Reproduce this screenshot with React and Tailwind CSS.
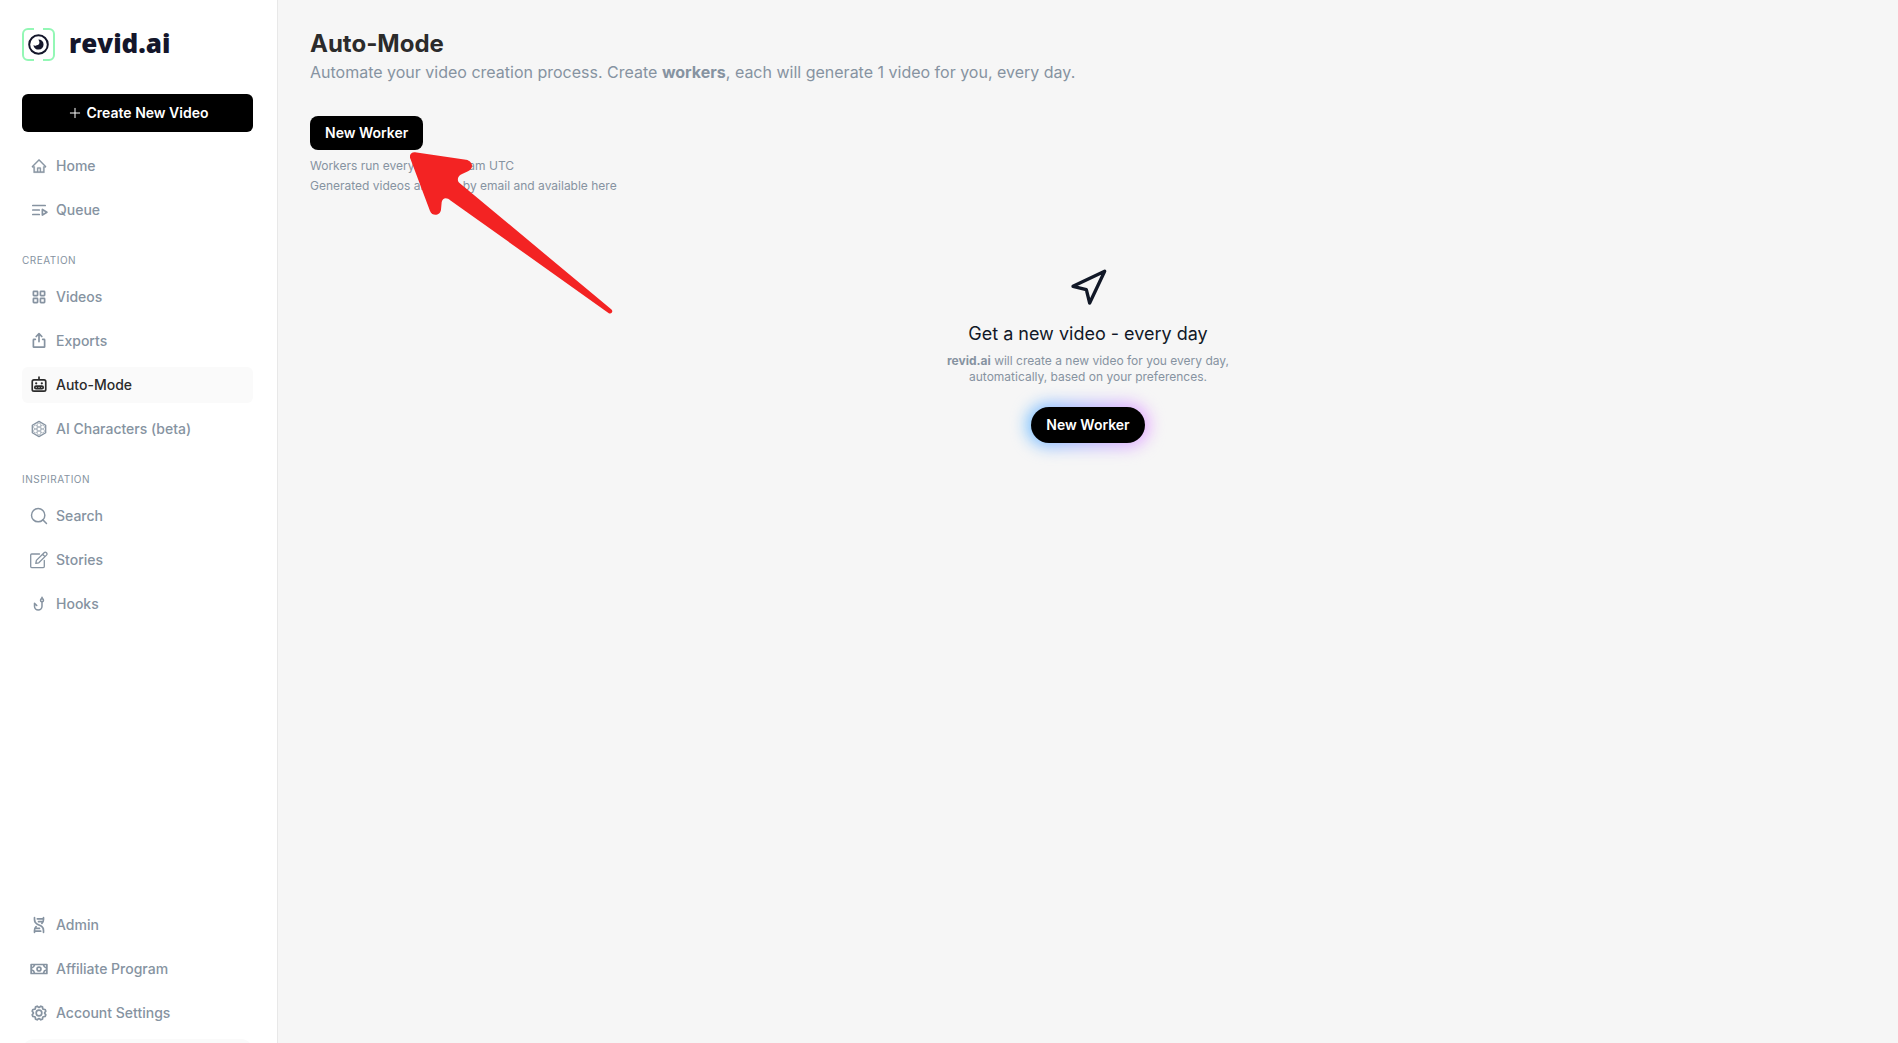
import React from "react";
import { Navigation, Plus, Search } from "lucide-react";
import { AiOutlineHome } from "react-icons/ai";
import {
  PiDnaBold,
  PiExportBold,
  PiGearBold,
  PiMoneyBold,
  PiQueueBold,
  PiRobotBold,
  PiSquaresFourBold,
} from "react-icons/pi";
import { TbFishHook } from "react-icons/tb";

const mainLinks = [
  { label: "Home", icon: <AiOutlineHome size={16} strokeWidth={24} /> },
  { label: "Queue", icon: <PiQueueBold size={18} /> },
];

const creationLinks = [
  { label: "Videos", icon: <PiSquaresFourBold size={18} /> },
  { label: "Exports", icon: <PiExportBold size={18} /> },
  { label: "Auto-Mode", icon: <PiRobotBold size={18} />, active: true },
  { label: "AI Characters (beta)", icon: <CharactersIcon /> },
];

const inspirationLinks = [
  { label: "Search", icon: <Search size={20} strokeWidth={1.75} /> },
  { label: "Stories", icon: <StoriesIcon /> },
  { label: "Hooks", icon: <TbFishHook size={18} /> },
];

const accountLinks = [
  { label: "Admin", icon: <PiDnaBold size={18} /> },
  { label: "Affiliate Program", icon: <PiMoneyBold size={18} /> },
  { label: "Account Settings", icon: <PiGearBold size={18} /> },
];

function CharactersIcon() {
  const cells = [
    [9, 9],
    [9, 5],
    [9, 13],
    [5.4, 7],
    [12.6, 7],
    [5.4, 11],
    [12.6, 11],
  ];

  return (
    <svg width="18" height="18" viewBox="0 0 18 18" fill="none" stroke="currentColor">
      <path d="M9 1.4 15.7 5.2v7.6L9 16.6 2.3 12.8V5.2Z" strokeWidth="1.3" strokeLinejoin="round" />
      {cells.map(([cx, cy]) => (
        <circle key={`${cx}-${cy}`} cx={cx} cy={cy} r="1.9" strokeWidth="0.6" />
      ))}
    </svg>
  );
}

function StoriesIcon() {
  return (
    <svg
      width="18"
      height="18"
      viewBox="0 0 18 18"
      fill="none"
      stroke="currentColor"
      strokeWidth="1.3"
      strokeLinecap="round"
      strokeLinejoin="round"
    >
      <path d="M9.500 3H1.700a1 1 0 0 0-1 1v11.600a1 1 0 0 0 1 1h11.600a1 1 0 0 0 1-1V9.500" />
      <path d="M5.800 12.300l.6-2.900 7.700-7.700a1.700 1.700 0 0 1 2.400 2.400l-7.700 7.700ZM12.600 3.200l2.400 2.400" />
    </svg>
  );
}

function Logo() {
  return (
    <a href="#" className="flex items-center gap-3.5 text-[#14162b]">
      <svg width="33" height="33" viewBox="0 0 33 33" fill="none">
        <path
          d="M12 1H6a5 5 0 0 0-5 5v21a5 5 0 0 0 5 5h6M21 1h6a5 5 0 0 1 5 5v21a5 5 0 0 1-5 5h-6"
          stroke="#93f7b5"
          strokeWidth="2"
        />
        <circle cx="16.5" cy="16.5" r="9.3" stroke="currentColor" strokeWidth="2" />
        <path
          d="M16.4 11.4a5.1 5.1 0 1 1-5 5.6 2.4 2.4 0 0 0 3.2.2 2.9 2.9 0 0 0 2.8-3.2c-.1-1-.7-1.7-1-2.6Z"
          fill="currentColor"
        />
      </svg>
      <span className="pb-1 font-['Open_Sans',sans-serif] text-[26px] leading-7 font-extrabold">revid.ai</span>
    </a>
  );
}

function NavList({ links }) {
  return (
    <ul className="space-y-2">
      {links.map(({ label, icon, active }) => (
        <li key={label}>
          <a
            href="#"
            className={`flex h-9 items-center gap-1.5 rounded-md px-1.5 text-sm font-medium ${
              active ? "bg-[#fafafa] text-[#2b2b2b]" : "text-[#8693a1]"
            }`}
          >
            <span className="grid w-[22px] shrink-0 place-items-center">{icon}</span>
            {label}
          </a>
        </li>
      ))}
    </ul>
  );
}

function NavHeading({ children }) {
  return <h2 className="mt-6 mb-[11px] text-[10px] leading-4 tracking-wider text-[#8693a1] uppercase">{children}</h2>;
}

function Sidebar() {
  return (
    <aside className="flex w-[278px] shrink-0 flex-col border-r border-[#e8e8e8] bg-white pr-6 pl-[22px]">
      <div className="pt-7">
        <Logo />
      </div>
      <button
        type="button"
        className="mt-[33px] flex h-[38px] shrink-0 items-center justify-center gap-1 rounded-md bg-black text-sm font-semibold text-white"
      >
        <Plus size={16} strokeWidth={1.5} />
        Create New Video
      </button>

      <nav className="mt-4 flex grow flex-col">
        <NavList links={mainLinks} />
        <NavHeading>Creation</NavHeading>
        <NavList links={creationLinks} />
        <NavHeading>Inspiration</NavHeading>
        <NavList links={inspirationLinks} />
        <div className="mt-auto pb-2">
          <NavList links={accountLinks} />
        </div>
      </nav>
      <div className="-mb-[60px] h-16 shrink-0 rounded-xl bg-[#fafafa]" />
    </aside>
  );
}

function Arrow() {
  return (
    <svg
      className="pointer-events-none absolute -top-2 left-[100px]"
      width="204"
      height="168"
      viewBox="410 148 204 168"
      fill="#f32323"
    >
      <path d="M410.300 158.500C409 155 411 152 415 152.300L466 159.800C470 160.500 472 163.500 472 166C472 168.500 470.500 170 468 171.200L461 174.500C457.500 176.500 456.800 180.500 459.500 183L611.500 309.500C613.500 311.500 611.500 314.500 608.800 313.200L450.500 200.500C447 197 442.500 197.500 441.700 202L441 209.500C440.500 215.500 432.500 217 430 211Z" />
    </svg>
  );
}

function EmptyState() {
  return (
    <section className="mt-18 flex flex-col items-center text-center">
      <Navigation size={40} className="text-[#111827]" />
      <h2 className="mt-3 text-lg leading-7 text-[#111827]">Get a new video - every day</h2>
      <p className="mt-[5px] w-[300px] text-xs leading-4 text-[#8693a1]">
        <b>revid.ai</b> will create a new video for you every day, automatically, based on your preferences.
      </p>
      <div className="relative mt-[22px]">
        <div className="absolute -inset-1 rounded-full bg-linear-to-r from-[#6cc0ff] to-[#e9a5ff] blur-sm" />
        <button
          type="button"
          className="relative h-9 rounded-full bg-black px-[15px] text-sm font-semibold text-white"
        >
          New Worker
        </button>
      </div>
    </section>
  );
}

export default function App() {
  return (
    <div className="flex h-screen overflow-hidden bg-[#f6f6f6] font-[Inter,sans-serif]">
      <Sidebar />
      <main className="grow">
        <header className="px-8 pt-7">
          <h1 className="text-2xl leading-8 font-bold text-[#2b2b2b]">Auto-Mode</h1>
          <p className="text-base leading-6 text-[#8693a1]">
            Automate your video creation process. Create <b>workers</b>, each will generate 1 video for you, every day.
          </p>
          <button
            type="button"
            className="mt-8 block h-[34px] rounded-lg bg-black px-[15px] text-sm font-semibold text-white"
          >
            New Worker
          </button>
          <div className="relative mt-1.5 text-xs leading-5 text-[#8693a1]">
            <p>Workers run every day at 10am UTC</p>
            <p>Generated videos are sent by email and available here</p>
            <Arrow />
          </div>
        </header>
        <EmptyState />
      </main>
    </div>
  );
}
